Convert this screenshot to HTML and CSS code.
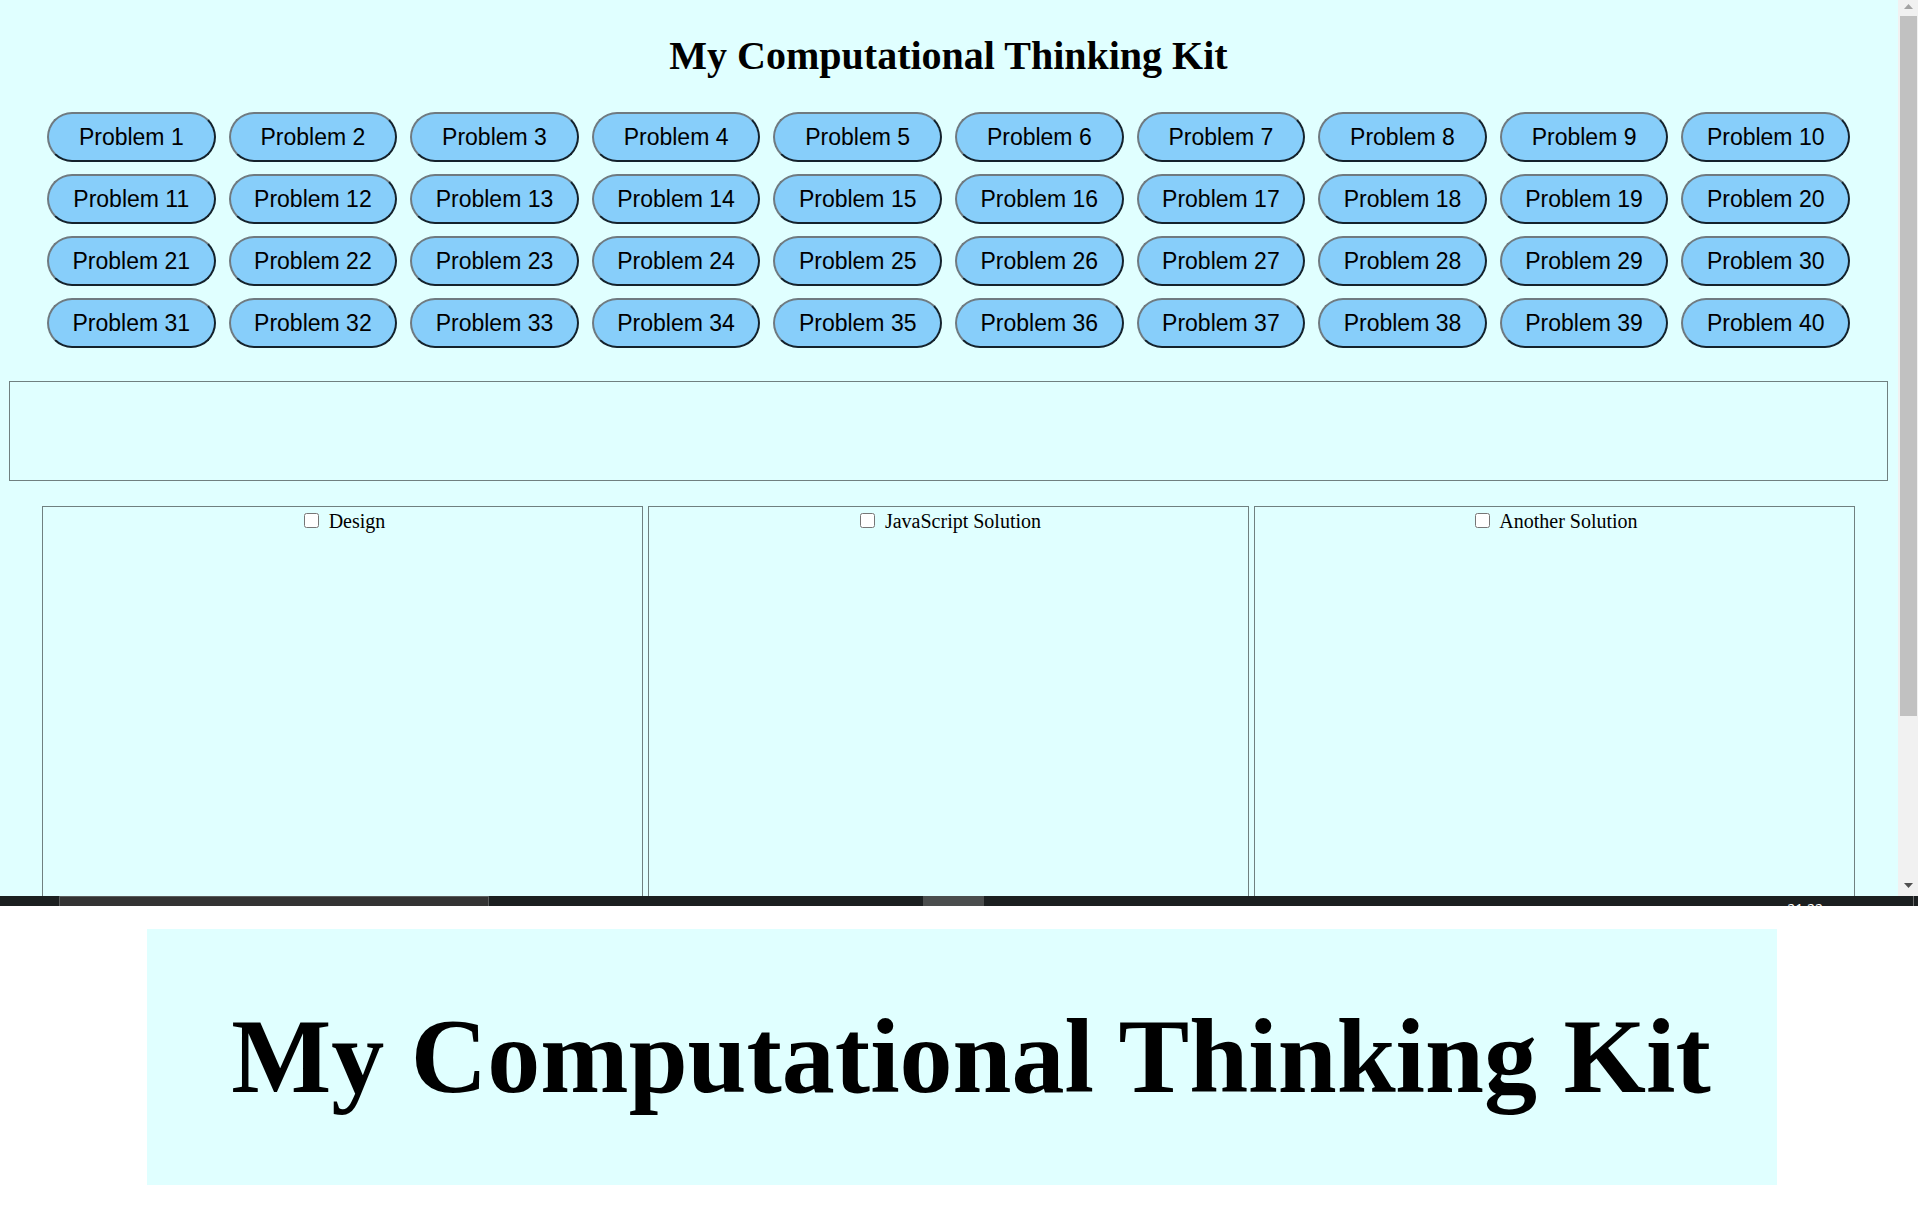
FILE: index.html
```html
<!DOCTYPE html>
<html lang="en">
<head>
<meta charset="utf-8">
<title>My Computational Thinking Kit</title>
<link rel="stylesheet" href="styles.css">
</head>
<body>
<div class="screen">
  <div class="viewport">
    <main class="page">
      <h1 class="title">My Computational Thinking Kit</h1>
      <div class="problems">
        <button class="problem" type="button">Problem 1</button>
        <button class="problem" type="button">Problem 2</button>
        <button class="problem" type="button">Problem 3</button>
        <button class="problem" type="button">Problem 4</button>
        <button class="problem" type="button">Problem 5</button>
        <button class="problem" type="button">Problem 6</button>
        <button class="problem" type="button">Problem 7</button>
        <button class="problem" type="button">Problem 8</button>
        <button class="problem" type="button">Problem 9</button>
        <button class="problem" type="button">Problem 10</button>
        <button class="problem" type="button">Problem 11</button>
        <button class="problem" type="button">Problem 12</button>
        <button class="problem" type="button">Problem 13</button>
        <button class="problem" type="button">Problem 14</button>
        <button class="problem" type="button">Problem 15</button>
        <button class="problem" type="button">Problem 16</button>
        <button class="problem" type="button">Problem 17</button>
        <button class="problem" type="button">Problem 18</button>
        <button class="problem" type="button">Problem 19</button>
        <button class="problem" type="button">Problem 20</button>
        <button class="problem" type="button">Problem 21</button>
        <button class="problem" type="button">Problem 22</button>
        <button class="problem" type="button">Problem 23</button>
        <button class="problem" type="button">Problem 24</button>
        <button class="problem" type="button">Problem 25</button>
        <button class="problem" type="button">Problem 26</button>
        <button class="problem" type="button">Problem 27</button>
        <button class="problem" type="button">Problem 28</button>
        <button class="problem" type="button">Problem 29</button>
        <button class="problem" type="button">Problem 30</button>
        <button class="problem" type="button">Problem 31</button>
        <button class="problem" type="button">Problem 32</button>
        <button class="problem" type="button">Problem 33</button>
        <button class="problem" type="button">Problem 34</button>
        <button class="problem" type="button">Problem 35</button>
        <button class="problem" type="button">Problem 36</button>
        <button class="problem" type="button">Problem 37</button>
        <button class="problem" type="button">Problem 38</button>
        <button class="problem" type="button">Problem 39</button>
        <button class="problem" type="button">Problem 40</button>
      </div>
      <section class="statement"></section>
      <div class="panels">
        <section class="panel"><input class="check" type="checkbox" id="design"> <label for="design">Design</label></section>
        <section class="panel"><input class="check" type="checkbox" id="js"> <label for="js">JavaScript Solution</label></section>
        <section class="panel"><input class="check" type="checkbox" id="another"> <label for="another">Another Solution</label></section>
      </div>
    </main>
    <div class="scrollbar">
      <svg class="arrow" viewBox="0 0 20 16" aria-hidden="true"><path d="M6 9h9L10.500 4z" fill="#a3a3a3"/></svg>
      <div class="track"><div class="thumb"></div></div>
      <svg class="arrow" viewBox="0 0 20 16" aria-hidden="true"><path d="M6 3h9L10.500 8z" fill="#505050"/></svg>
    </div>
  </div>
  <div class="taskbar">
    <div class="search"></div>
    <div class="active"></div>
    <time class="clock">21:22</time>
    <div class="edge"></div>
  </div>
</div>
<div class="banner">My Computational Thinking Kit</div>
</body>
</html>
```
FILE: styles.css
```css
* { box-sizing: border-box; }
body {
  margin: 0;
  background: #fff;
  color: #000;
  font-family: "Liberation Serif", "Times New Roman", serif;
}
.screen { margin-right: 4px; }
.viewport { display: flex; }
.page {
  flex: 1;
  padding: 32px 10px 0 9px;
  background: #e0ffff;
}
.title {
  margin: 0 0 32px;
  font-size: 40px;
  line-height: 48px;
  text-align: center;
}
.problems {
  display: grid;
  grid-template-columns: repeat(10, 1fr);
  gap: 12px 13px;
  padding: 0 38px;
}
.problem {
  height: 50px;
  padding: 0;
  border: 2px solid;
  border-color: #6f7a80 #14222c #14222c #6f7a80;
  border-radius: 25px;
  background: #87cefa;
  color: #000;
  font: 23px "Liberation Sans", Arial, sans-serif;
}
.statement {
  height: 100px;
  margin: 33px 0 25px;
  border: 1px solid #708080;
}
.panels {
  display: flex;
  gap: 5px;
  padding: 0 33px;
}
.panel {
  flex: 1;
  height: 390px;
  padding-top: 2px;
  border: 1px solid #708080;
  border-bottom: 0;
  font-size: 20px;
  line-height: 24px;
  text-align: center;
}
.check {
  width: 15px;
  height: 15px;
  margin: 0 5px 2px 4px;
  vertical-align: baseline;
}
.scrollbar {
  display: flex;
  flex-direction: column;
  width: 20px;
  background: #f1f1f1;
}
.arrow { width: 20px; height: 16px; }
.track { flex: 1; padding: 0 1px 0 2px; }
.thumb { height: 81%; background: #c1c1c1; }
.taskbar {
  display: flex;
  height: 10px;
  overflow: hidden;
  background: #1b1f20;
}
.search {
  width: 430px;
  margin-left: 59px;
  border: 1px solid #5a5c5c;
  border-bottom: 0;
  background: #333;
}
.active {
  width: 61px;
  margin-left: 434px;
  background: #4a4d4d;
}
.clock {
  margin-left: auto;
  padding-top: 3px;
  color: #fff;
  font: 14px "Open Sans", sans-serif;
}
.edge {
  width: 5px;
  margin-left: 90px;
  border-left: 1px solid #6c6e6e;
}
.banner {
  margin: 23px 145px 26px 147px;
  padding: 58px 0 58px 18px;
  background: #e0ffff;
  font-size: 106px;
  font-weight: bold;
  line-height: 140px;
  text-align: center;
  white-space: nowrap;
}
```
